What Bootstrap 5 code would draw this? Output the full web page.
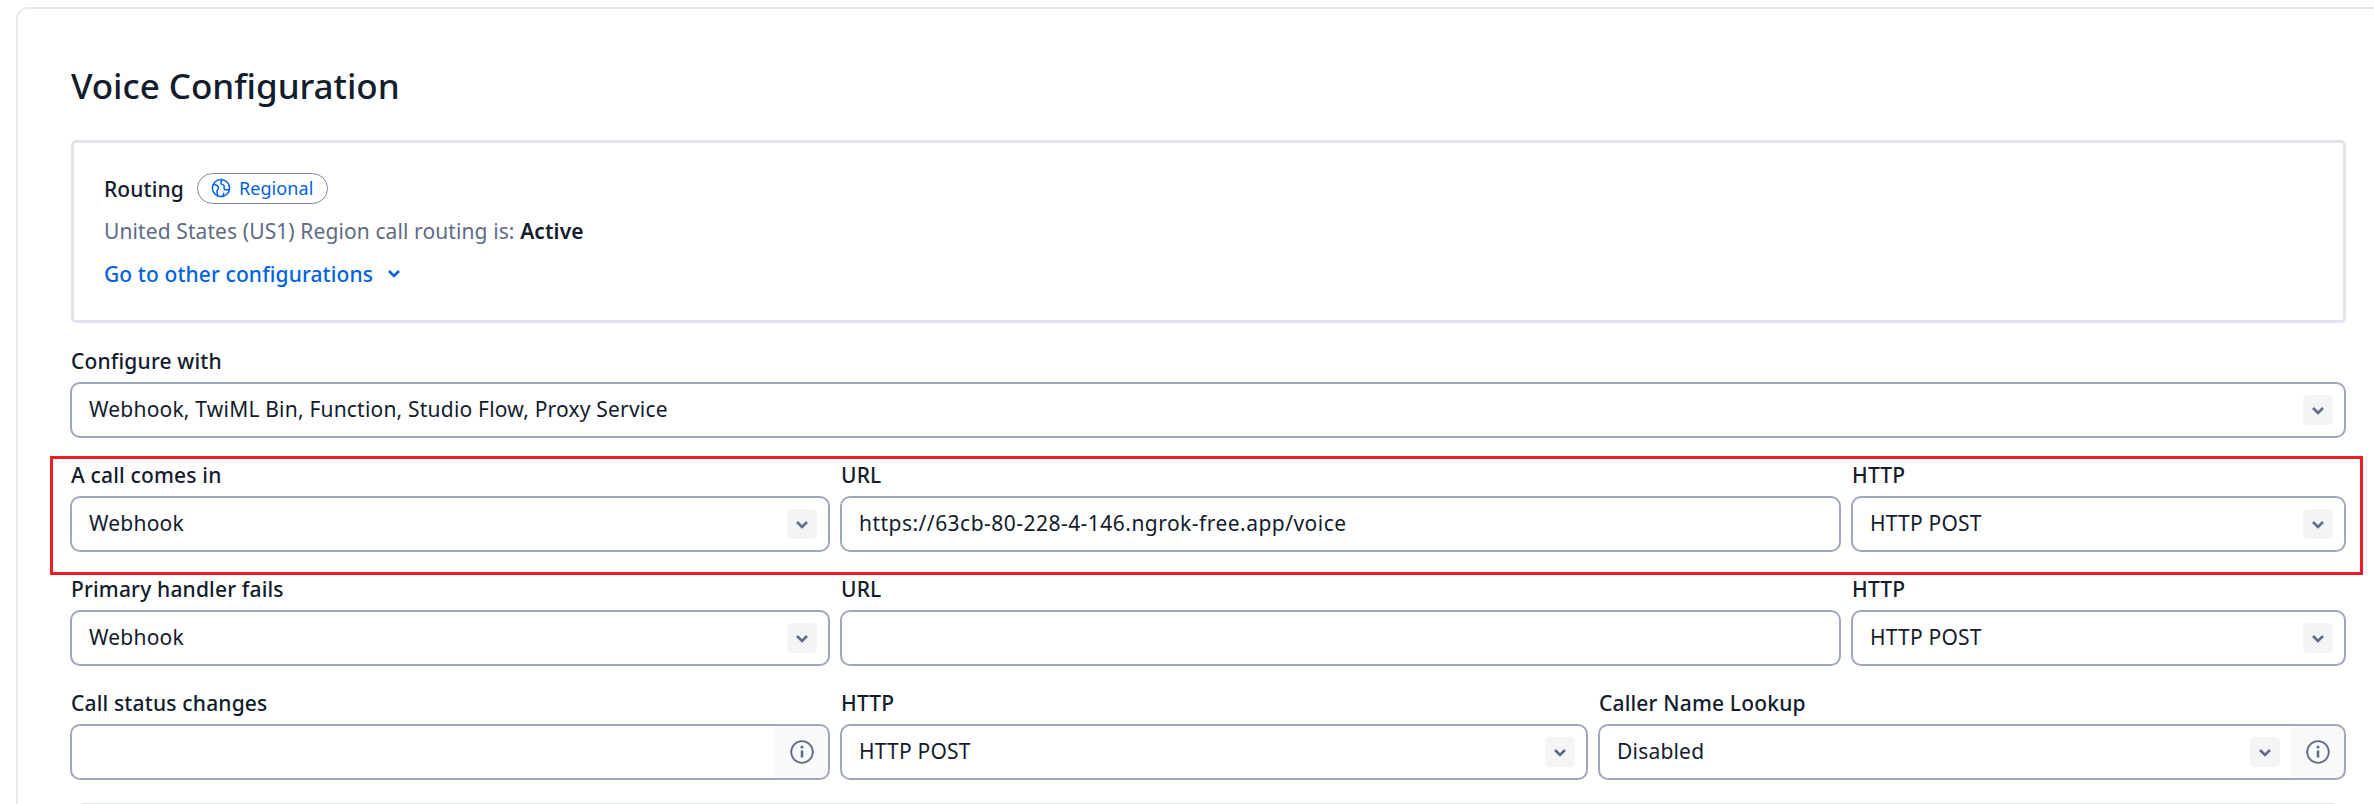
<!doctype html>
<html lang="en">
<head>
<meta charset="utf-8">
<title>Voice Configuration</title>
<link href="https://cdn.jsdelivr.net/npm/bootstrap@5.3.0/dist/css/bootstrap.min.css" rel="stylesheet">
<style>
html,body{height:804px;overflow:hidden;background:#fff}
body{font-family:"Noto Sans","Liberation Sans",sans-serif;color:#121c2d;font-size:21px;line-height:30px;letter-spacing:.1px}
.shell{margin:7px 0 0 16px;height:830px;border:2px solid #e8eaef;border-right:0;border-radius:12px 0 0 0;padding:53px 28px 0 52px}
.page-title{font-size:35px;font-weight:500;line-height:48px;margin:0 0 30px 1px;letter-spacing:-.05px}
.routing-box{border:3px solid #e1e3ea;border-radius:5px;height:183px;padding:30px 30px 0;margin:0 0 23px 1px}
.r-line{display:flex;align-items:center;height:31px}
.r-name{font-weight:500;margin-right:13px}
.pill{display:inline-flex;align-items:center;gap:8px;height:31px;padding:0 13px 1px;border:1px solid #7f89a3;border-radius:16px;color:#0263e0;font-size:18px}
.r-sub{color:#606b85;margin-top:12px}
.r-sub b{color:#121c2d;font-weight:600}
.r-link{display:flex;align-items:center;gap:14px;color:#0263e0;font-weight:500;text-decoration:none;margin-top:13px}
.fld-label{display:block;font-weight:500;line-height:30px;height:30px;margin:0 0 6px 1px;letter-spacing:.17px}
.ctl,.form-select.ctl,.form-control.ctl{height:56px;border:2px solid #a0a7bc;border-radius:10px;font-size:21px;line-height:30px;letter-spacing:.2px;color:#121c2d;padding:0 16px 2px 17px;box-shadow:none}
.form-control.ctl{letter-spacing:.47px}
.form-select.ctl{background-image:url("data:image/svg+xml,%3Csvg xmlns='http://www.w3.org/2000/svg' width='30' height='30'%3E%3Crect width='30' height='30' rx='5' fill='%23f4f4f6'/%3E%3Cpath d='M10 13l5 5 5-5' fill='none' stroke='%23606b85' stroke-width='2.6'/%3E%3C/svg%3E");background-position:right 11px center;background-size:30px 30px}
.f-row{display:grid;gap:10px}
.f-3{grid-template-columns:760fr 1001fr 495fr}
.f-eq{grid-template-columns:760fr 748fr 748fr}
.f-row + .f-row{margin-top:22px}
.first-row{margin-bottom:22px}
.red-frame{position:absolute;left:50px;top:456px;width:2313px;height:119px;border:3px solid #ed1c24;pointer-events:none}
.input-group .ctl.form-control{border-right:0;border-radius:10px 0 0 10px}
.input-group .form-select.ctl{border-right:0;border-radius:10px 0 0 10px}
.input-group .addon{width:56px;justify-content:center;background:#f9f9fa;border:2px solid #a0a7bc;border-left:1px solid #e1e3ea;border-radius:0 10px 10px 0;padding:0;margin-left:0}
.next-box{margin:23px 8px 0 8px;border:3px solid #e1e3ea;border-bottom:0;border-radius:5px 5px 0 0;height:30px}
</style>
</head>
<body>
<div class="red-frame"></div>
<main class="shell">
  <h1 class="page-title">Voice Configuration</h1>
  <section class="routing-box">
    <div class="r-line"><span class="r-name">Routing</span>
      <span class="pill"><svg width="20" height="20" viewBox="0 0 20 20" fill="none" stroke="#0263e0" stroke-width="1.5"><circle cx="10" cy="10" r="8.6"/><path d="M3 6.5c2 .2 4 1 4.500 3 .4 1.500-1 2-1.500 3.500-.3 1 .2 2.500.6 4M11 1.700c-.5 1.500-1.300 2.500-1 3.800.3 1.200 2.200 1 3 2 .8 1-.5 2.200.2 3.500.6 1 2.500 1 4.900.6M12.500 18c-.3-1.200-.3-2.500.5-3.300"/></svg>Regional</span></div>
    <div class="r-sub">United States (US1) Region call routing is: <b>Active</b></div>
    <a class="r-link" href="#">Go to other configurations <svg width="14" height="10" viewBox="0 0 14 10" fill="none" stroke="#0263e0" stroke-width="2.6"><path d="M2 2l5 5 5-5"/></svg></a>
  </section>

  <div class="first-row">
    <label class="fld-label">Configure with</label>
    <select class="form-select ctl"><option>Webhook, TwiML Bin, Function, Studio Flow, Proxy Service</option></select>
  </div>

  <div class="f-row f-3">
    <div><label class="fld-label">A call comes in</label><select class="form-select ctl"><option>Webhook</option></select></div>
    <div><label class="fld-label">URL</label><input class="form-control ctl" value="https://63cb-80-228-4-146.ngrok-free.app/voice"></div>
    <div><label class="fld-label">HTTP</label><select class="form-select ctl"><option>HTTP POST</option></select></div>
  </div>
  <div class="f-row f-3">
    <div><label class="fld-label">Primary handler fails</label><select class="form-select ctl"><option>Webhook</option></select></div>
    <div><label class="fld-label">URL</label><input class="form-control ctl"></div>
    <div><label class="fld-label">HTTP</label><select class="form-select ctl"><option>HTTP POST</option></select></div>
  </div>
  <div class="f-row f-eq">
    <div><label class="fld-label">Call status changes</label>
      <div class="input-group"><input class="form-control ctl"><span class="input-group-text addon"><svg width="24" height="24" viewBox="0 0 24 24" fill="none" stroke="#606b85" stroke-width="1.800"><circle cx="12" cy="12" r="10.800"/><path d="M12 10.500v7" stroke-width="2.600"/><circle cx="12" cy="7" r="1.600" fill="#606b85" stroke="none"/></svg></span></div></div>
    <div><label class="fld-label">HTTP</label><select class="form-select ctl"><option>HTTP POST</option></select></div>
    <div><label class="fld-label">Caller Name Lookup</label>
      <div class="input-group"><select class="form-select ctl"><option>Disabled</option></select><span class="input-group-text addon"><svg width="24" height="24" viewBox="0 0 24 24" fill="none" stroke="#606b85" stroke-width="1.800"><circle cx="12" cy="12" r="10.800"/><path d="M12 10.500v7" stroke-width="2.600"/><circle cx="12" cy="7" r="1.600" fill="#606b85" stroke="none"/></svg></span></div></div>
  </div>
  <div class="next-box"></div>
</main>
<script src="https://cdn.jsdelivr.net/npm/bootstrap@5.3.0/dist/js/bootstrap.bundle.min.js"></script>
</body>
</html>
